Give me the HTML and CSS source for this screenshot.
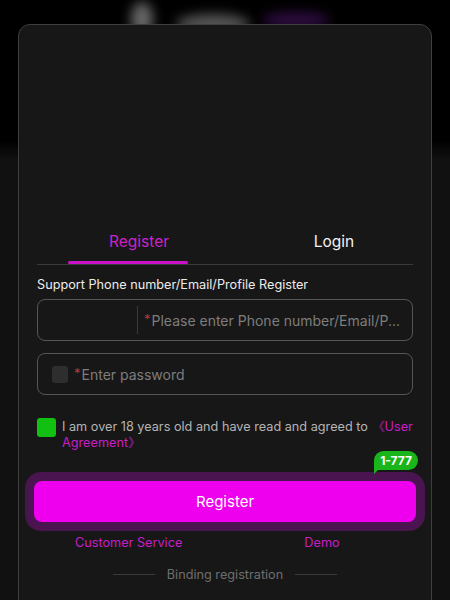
FILE: index.html
```html
<!DOCTYPE html>
<html lang="en">
<head>
    <meta charset="UTF-8">
    <meta name="viewport" content="width=device-width, initial-scale=1.0">
    <title>Register</title>
    <link rel="stylesheet" href="styles.css">
</head>
<body>
    <div class="logo">
        <span class="blob blob-a"></span>
        <span class="blob blob-b"></span>
        <span class="blob blob-c"></span>
    </div>

    <div class="card">
        <div class="banner"></div>

        <div class="tabs">
            <div class="tab active">
                <span class="tab-label">Register</span>
                <span class="indicator"></span>
            </div>
            <div class="tab">
                <span class="tab-label">Login</span>
            </div>
        </div>

        <p class="hint">Support Phone number/Email/Profile Register</p>

        <div class="field">
            <div class="prefix"></div>
            <span class="placeholder"><b>*</b>Please enter Phone number/Email/P...</span>
        </div>

        <div class="field field-pass">
            <span class="lock"></span>
            <span class="placeholder"><b>*</b>Enter password</span>
        </div>

        <div class="agree">
            <span class="check"></span>
            <p>I am over 18 years old and have read and agreed to <a>《User Agreement》</a></p>
        </div>

        <div class="submit-wrap">
            <span class="badge">1-777</span>
            <div class="submit-ring">
                <button class="submit">Register</button>
            </div>
        </div>

        <div class="links">
            <a>Customer Service</a>
            <a>Demo</a>
        </div>

        <div class="binding">
            <span class="line"></span>
            <span>Binding registration</span>
            <span class="line"></span>
        </div>
    </div>
</body>
</html>
```

FILE: styles.css
```css
body {
    margin: 0;
    height: 600px;
    overflow: hidden;
    background: linear-gradient(#000 0, #000 140px, #111 160px, #111 100%);
    font-family: Inter, "Noto Sans", sans-serif;
    position: relative;
}
.logo {
    position: absolute;
    top: 0;
    left: 0;
    width: 450px;
    height: 30px;
}
.blob {
    position: absolute;
    filter: blur(6px);
    border-radius: 50%;
}
.blob-a {
    left: 131px;
    top: 2px;
    width: 22px;
    height: 34px;
    background: #666;
}
.blob-b {
    left: 176px;
    top: 14px;
    width: 74px;
    height: 20px;
    background: #555;
}
.blob-c {
    left: 262px;
    top: 12px;
    width: 68px;
    height: 16px;
    background: #2e0c40;
}
.card {
    position: relative;
    margin: 24px 18px 0;
    height: 600px;
    box-sizing: border-box;
    background: #171717;
    border: 1px solid #3e3e3e;
    border-radius: 12px;
    padding: 0 18px;
}
.banner {
    height: 200px;
}
.tabs {
    display: flex;
    border-bottom: 1px solid #3a3a3a;
}
.tab {
    display: flex;
    flex-direction: column;
    align-items: center;
    height: 39px;
    font-size: 15.5px;
    color: #f2f2f2;
}
.tab:first-child {
    width: 204px;
}
.tab:last-child {
    flex: 1;
    padding-left: 14px;
}
.tab-label {
    line-height: 34px;
}
.tab.active {
    color: #cc22cc;
}
.indicator {
    margin-top: auto;
    align-self: flex-start;
    margin-left: 31px;
    width: 120px;
    height: 3px;
    border-radius: 2px;
    background: #cc11cc;
}
.hint {
    margin: 11px 0 5px;
    font-size: 12.7px;
    line-height: 18px;
    color: #ececec;
}
.field {
    display: flex;
    align-items: center;
    height: 42px;
    box-sizing: border-box;
    border: 1px solid #555;
    border-radius: 8px;
}
.prefix {
    flex: none;
    width: 99px;
    height: 28px;
    border-right: 1px solid #3a3a3a;
    margin-right: 6px;
}
.placeholder {
    font-size: 14px;
    color: #7d7d7d;
    white-space: nowrap;
}
.placeholder b {
    font-weight: normal;
    color: #b33a3a;
    font-size: 13px;
    vertical-align: 2px;
    margin-right: 1px;
}
.field-pass {
    margin-top: 12px;
    padding-left: 14px;
}
.lock {
    flex: none;
    width: 16px;
    height: 17px;
    border-radius: 3px;
    background: #2e2e2e;
    margin-right: 6px;
}
.agree {
    display: flex;
    gap: 6px;
    margin-top: 23px;
}
.check {
    flex: none;
    width: 19px;
    height: 19px;
    border-radius: 3px;
    background: #12c012;
}
.agree p {
    margin: 1px 0 0;
    font-size: 12.7px;
    line-height: 16px;
    color: #b4b4b4;
}
.agree a {
    color: #c81ec8;
}
.submit-wrap {
    position: relative;
    margin: 21px -12px 0;
}
.badge {
    position: absolute;
    right: 7px;
    top: -21px;
    z-index: 1;
    background: #1ab51a;
    color: #fff;
    font-weight: bold;
    font-size: 12px;
    line-height: 19px;
    padding: 0 6px;
    border-radius: 10px 10px 10px 0;
}
.badge::after {
    content: "";
    position: absolute;
    left: 0;
    bottom: -4px;
    border-left: 4px solid #1ab51a;
    border-bottom: 4px solid transparent;
}
.submit-ring {
    background: #4a1450;
    border-radius: 16px;
    padding: 9px;
}
.submit {
    display: block;
    width: 100%;
    height: 41px;
    border: none;
    border-radius: 8px;
    background: #ee00ee;
    color: #fff;
    font-family: inherit;
    font-size: 15px;
}
.links {
    display: flex;
    margin-top: 4px;
    font-size: 12.7px;
    line-height: 16px;
}
.links a {
    color: #c81ec8;
}
.links a:first-child {
    margin-left: 38px;
}
.links a:last-child {
    margin-left: 122px;
}
.binding {
    display: flex;
    justify-content: center;
    align-items: center;
    gap: 12px;
    margin-top: 16px;
    font-size: 12.7px;
    color: #6e6e6e;
}
.line {
    width: 42px;
    height: 1px;
    background: #3a3a3a;
}
```
